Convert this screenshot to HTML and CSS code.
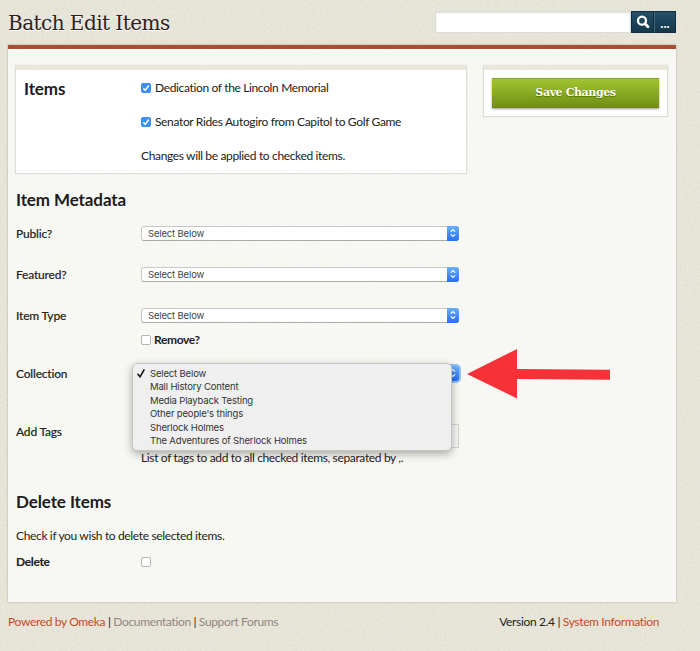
FILE: index.html
```html
<!DOCTYPE html>
<html lang="en">
<head>
<meta charset="utf-8">
<title>Batch Edit Items</title>
<link rel="stylesheet" href="styles.css">
</head>
<body>
<svg class="texture" width="700" height="651" aria-hidden="true">
  <filter id="grain" x="0" y="0" width="100%" height="100%">
    <feTurbulence type="fractalNoise" baseFrequency="0.45" numOctaves="2" seed="4"/>
    <feColorMatrix values="0 0 0 0 0.45  0 0 0 0 0.42  0 0 0 0 0.3  0.25 0 0 0 -0.08"/>
  </filter>
  <rect width="700" height="651" filter="url(#grain)"/>
</svg>
<div class="page">
  <header class="header">
    <h1 class="title">Batch Edit Items</h1>
    <div class="search">
      <div class="search-field"></div>
      <div class="search-btn"><svg width="14" height="14" viewBox="0 0 14 14"><circle cx="6" cy="5.7" r="4" fill="none" stroke="#fff" stroke-width="2.3"/><path d="M9 8.8L12 11.8" stroke="#fff" stroke-width="2.8" stroke-linecap="round"/></svg></div>
      <div class="search-btn more">...</div>
    </div>
  </header>
  <main class="panel">
    <div class="main-col">
      <section class="box items">
        <h2 class="heading">Items</h2>
        <div class="items-list">
          <div class="item"><span class="check on"><svg width="10" height="10" viewBox="0 0 10 10"><path d="M2.3 5.3L4.2 7.3L7.8 2.5" fill="none" stroke="#fff" stroke-width="1.4"/></svg></span><span>Dedication of the Lincoln Memorial</span></div>
          <div class="item"><span class="check on"><svg width="10" height="10" viewBox="0 0 10 10"><path d="M2.3 5.3L4.2 7.3L7.8 2.5" fill="none" stroke="#fff" stroke-width="1.4"/></svg></span><span>Senator Rides Autogiro from Capitol to Golf Game</span></div>
          <div class="item"><span>Changes will be applied to checked items.</span></div>
        </div>
      </section>
      <h2 class="heading section">Item Metadata</h2>
      <div class="row"><label class="label">Public?</label><div class="select"><span>Select Below</span><i class="cap"><svg width="12" height="14" viewBox="0 0 12 14"><path d="M3.8 5.7L6 3.5L8.2 5.7M3.8 8.3L6 10.5L8.2 8.3" fill="none" stroke="#fff" stroke-width="1.1"/></svg></i></div></div>
      <div class="row"><label class="label">Featured?</label><div class="select"><span>Select Below</span><i class="cap"><svg width="12" height="14" viewBox="0 0 12 14"><path d="M3.8 5.7L6 3.5L8.2 5.7M3.8 8.3L6 10.5L8.2 8.3" fill="none" stroke="#fff" stroke-width="1.1"/></svg></i></div></div>
      <div class="row"><label class="label">Item Type</label><div class="select"><span>Select Below</span><i class="cap"><svg width="12" height="14" viewBox="0 0 12 14"><path d="M3.8 5.7L6 3.5L8.2 5.7M3.8 8.3L6 10.5L8.2 8.3" fill="none" stroke="#fff" stroke-width="1.1"/></svg></i></div></div>
      <div class="row remove"><span class="check"></span><span class="strong">Remove?</span></div>
      <div class="row collection"><label class="label">Collection</label>
        <div class="select focus"><i class="cap"><svg width="12" height="14" viewBox="0 0 12 14"><path d="M3.8 5.7L6 3.5L8.2 5.7M3.8 8.3L6 10.5L8.2 8.3" fill="none" stroke="#fff" stroke-width="1.1"/></svg></i>
          <ul class="menu">
            <li><svg class="tick" width="8" height="9" viewBox="0 0 8 9"><path d="M1 5.2L3 7.8L7 1" fill="none" stroke="#111" stroke-width="1.5" stroke-linecap="round"/></svg>Select Below</li>
            <li>Mall History Content</li>
            <li>Media Playback Testing</li>
            <li>Other people's things</li>
            <li>Sherlock Holmes</li>
            <li>The Adventures of Sherlock Holmes</li>
          </ul>
        </div>
      </div>
      <div class="row tags"><label class="label">Add Tags</label><div class="tags-col"><div class="tags-field"></div><p class="hint">List of tags to add to all checked items, separated by ,.</p></div></div>
      <h2 class="heading delete-heading">Delete Items</h2>
      <p class="explain">Check if you wish to delete selected items.</p>
      <div class="row delete"><label class="label strong">Delete</label><span class="check"></span></div>
    </div>
    <aside class="box save"><div class="save-btn">Save Changes</div></aside>
  </main>
  <footer class="footer">
    <div class="links"><a class="hot">Powered by Omeka</a> | <a>Documentation</a> | <a>Support Forums</a></div>
    <div class="version">Version 2.4 | <a class="hot">System Information</a></div>
  </footer>
</div>
<svg class="arrow" width="144" height="50" viewBox="0 0 144 50"><path d="M0 25L50 0V20L143 20.7V30.7L50 30V49.5Z" fill="#f63138"/></svg>
</body>
</html>
```
FILE: styles.css
```css
* { box-sizing: border-box; margin: 0; padding: 0; }
body { width: 700px; height: 651px; overflow: hidden; background: #e9e7db; color: #222; font: 12px/16px Lato, "Liberation Sans", sans-serif; letter-spacing: -.35px; white-space: nowrap; }
.texture { position: absolute; left: 0; top: 0; z-index: -1; }
.page { width: 668px; margin-left: 8px; }
.header { height: 45px; display: flex; justify-content: space-between; padding-top: 11px; }
.title { font: 400 20px/25px "DejaVu Serif", serif; letter-spacing: -.54px; color: #2c2020; text-shadow: 0 1px 0 #fff; }
.search { display: flex; height: 22px; }
.search-field { width: 196px; background: #fff; border: 1px solid #deddd5; box-shadow: inset 0 1px 2px #ddd; }
.search-btn { width: 23px; display: flex; align-items: center; justify-content: center; background: linear-gradient(#245068, #16374b); border: 1px solid #122d40; }
.more { width: 22px; border-left-color: #426578; color: #fff; font: 700 13px/16px Lato, sans-serif; letter-spacing: 0; padding-top: 1px; }
.panel { height: 557px; display: flex; align-items: flex-start; justify-content: space-between; padding: 16px 8px 0; border-top: 4px solid #a5512e; background: rgba(252, 254, 251, .76); box-shadow: inset 0 1px 0 #fff, 0 0 2px #aaa79b; }
.main-col { width: 452px; margin-left: -1px; }
.box { background: #fff; border: 1px solid #deded8; border-top: 5px solid #e8e7da; box-shadow: 0 0 1px #ccc; }
.items { height: 109px; display: flex; padding-left: 8px; }
.items .heading { width: 117px; padding-top: 6px; }
.items-list { padding-top: 1px; }
.heading { font: 700 17px/26px Lato, sans-serif; letter-spacing: -.1px; color: #211b1d; }
.item { height: 34px; display: flex; align-items: center; gap: 4px; }
.check { width: 10px; height: 10px; flex: none; display: block; border: 1px solid #b5b5b5; border-radius: 2px; background: #fff; }
.check.on { border: 0; background: #3b8ff5; }
.check svg { display: block; }
.section { margin: 13px 0 0 1px; }
.row { width: 443px; height: 41px; margin-left: 1px; display: flex; align-items: center; }
.label { width: 125px; font-weight: 500; letter-spacing: -.2px; -webkit-text-stroke: .1px #222; }
.strong { font-weight: 700; letter-spacing: -.35px; }
.select { position: relative; width: 318px; height: 15px; display: flex; justify-content: space-between; align-items: center; padding-left: 6px; background: #fff; border: 1px solid #c8c8c8; border-bottom-color: #aaa; border-radius: 3px; font: 9.5px/13px Inter, sans-serif; letter-spacing: -.16px; color: #444; }
.cap { width: 12px; height: 15px; margin-right: -1px; background: linear-gradient(#69b1fa, #286df5); border-radius: 0 3px 3px 0; display: block; }
.cap svg { display: block; }
.remove { height: 8px; padding-left: 125px; gap: 3px; }
.collection { height: 59px; }
.focus { justify-content: flex-end; box-shadow: 0 0 0 2px #8fc1f5; }
.menu { position: absolute; left: -10px; top: -4px; width: 320px; height: 88px; list-style: none; background: #efefef; border: 1px solid #c6c6c6; border-radius: 5px; box-shadow: 0 3px 8px rgba(0,0,0,.32); padding: 3px 0 0 17px; color: #333; }
.menu li { position: relative; height: 13.4px; line-height: 13.4px; }
.tick { position: absolute; left: -13px; top: 2px; }
.tags { height: 63px; align-items: flex-start; padding-top: 21px; }
.tags-field { width: 318px; height: 24px; border: 1px solid #d5d5d2; background: #f7f7f5; }
.hint { line-height: 19px; }
.delete-heading { margin: 23px 0 0 1px; }
.explain { margin: 13px 0 0 1px; }
.delete { margin-top: 9px; height: 17px; }
.save { width: 185px; height: 52px; padding: 8px 8px 0 8px; }
.save-btn { height: 30px; background: linear-gradient(#a1c432, #728f13); border-top: 1px solid #829e2f; border-bottom: 1px solid #6b841b; box-shadow: 0 1px 2px #999; color: #fff; font: 700 11px/28px "DejaVu Serif", serif; letter-spacing: -.4px; text-align: center; text-shadow: 0 1px 1px #567000; }
.footer { display: flex; justify-content: space-between; padding: 12px 17px 0 0; }
.footer a { color: #92857f; }
.footer a.hot { color: #c64a26; }
.arrow { position: absolute; left: 467px; top: 349px; }
```
